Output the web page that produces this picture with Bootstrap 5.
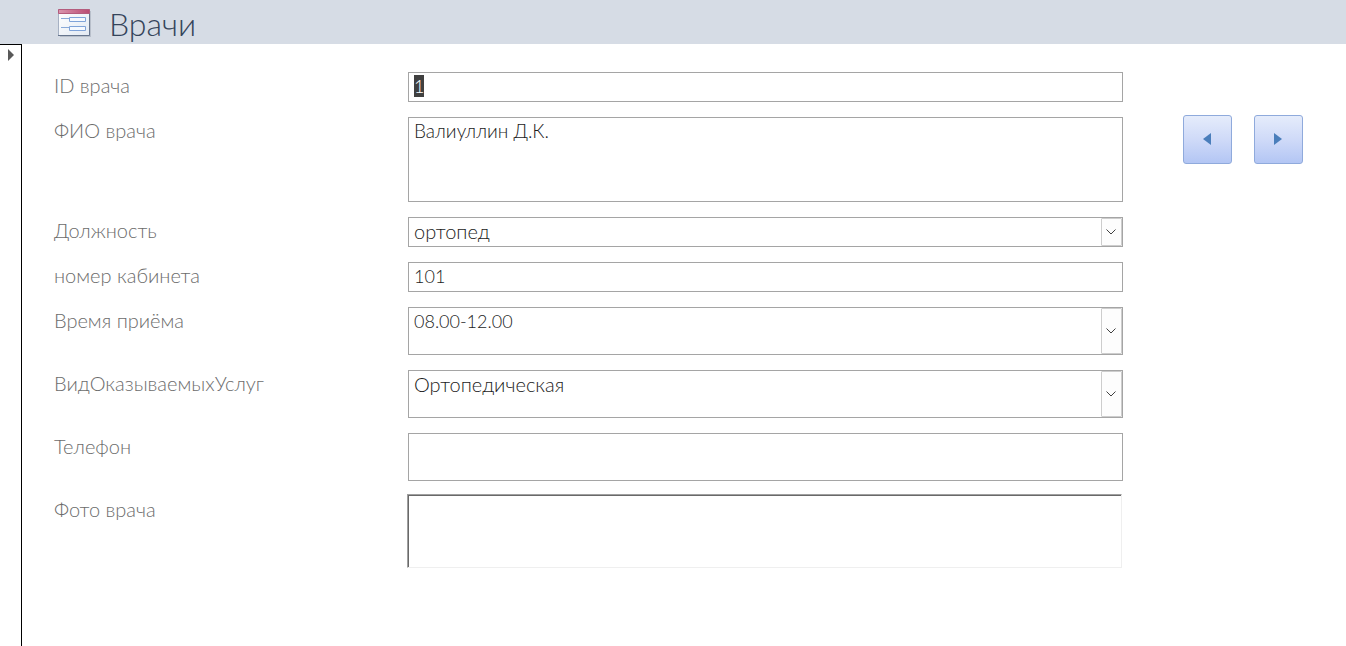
<!DOCTYPE html>
<html lang="ru">
<head>
<meta charset="utf-8">
<meta name="viewport" content="width=device-width, initial-scale=1">
<title>Врачи</title>
<link href="https://cdn.jsdelivr.net/npm/bootstrap@5.3.0/dist/css/bootstrap.min.css" rel="stylesheet">
<style>
body { font-family: "Century Gothic", Lato, "Open Sans", sans-serif; font-size: 20px; font-weight: 300; line-height: 26px; color: #1c1c1c; background: #fff; }
.form-header { background: #d6dce5; height: 44px; padding-left: 57px; gap: 18px; }
.form-header h1 { font-size: 32px; line-height: 40px; font-weight: 300; color: #34445a; padding-top: 4px; }
.record-selector { width: 22px; border-top: 1px solid #000; border-right: 1px solid #000; padding: 4px 0 0 8px; line-height: 0; }
.record-body { padding: 28px 43px 28px 32px; gap: 60px; }
.fields { display: grid; grid-template-columns: 354px minmax(0, 1fr); row-gap: 15px; }
.fields label { color: #6c6c6c; }
.fields .form-control, .fields .form-select { border: 1px solid #a5a5a5; border-radius: 0; padding: 0 5px 2px; font-size: 20px; font-weight: 300; line-height: 26px; color: #1c1c1c; background: #fff; box-shadow: none; resize: none; min-height: 0; height: 30px; display: block; }
.fields .form-control.memo { height: 85px; font-size: 19px; }
.fields .figures { font-size: 18px; }
.fields .tall { height: 48px; }
.fields select.tall { padding-bottom: 20px; }
.fields ::selection { background: #404040; color: #fff; }
.drop-arrow { top: 1px; right: 1px; bottom: 1px; width: 21px; border: 1px solid #cdcdcd; border-radius: 1px; background: #fdfdfd; pointer-events: none; }
.photo { height: 74px; margin: -2px 1px 0 -1px; border: 1px solid #efefef; border-top-color: #a0a0a0; border-left-color: #a0a0a0; box-shadow: inset 1px 1px #696969; }
.record-nav { gap: 22px; padding-top: 43px; }
.record-nav .btn { width: 49px; height: 49px; padding: 0; border: 1px solid #8faadc; border-radius: 3px; background: linear-gradient(#e5ecfb, #cfdaf8 50%, #b3c6f4); }
</style>
</head>
<body class="d-flex flex-column min-vh-100">
<header class="form-header d-flex align-items-center">
  <svg width="34" height="30" viewBox="0 0 34 30" aria-hidden="true">
    <defs><linearGradient id="pink" x2="1"><stop stop-color="#d995ad"/><stop offset="1" stop-color="#b94a72"/></linearGradient>
    <linearGradient id="paper" x2="1" y2="1"><stop stop-color="#fff"/><stop offset="1" stop-color="#e2e9f3"/></linearGradient></defs>
    <path d="M3 4h31v26H3z" fill="#8b94a3" opacity=".4"/>
    <path d="M1.500 2.500h31v26h-31z" fill="url(#paper)" stroke="#a6b1c3"/>
    <path d="M1 28.500h31.500V6" fill="none" stroke="#66758e"/>
    <path d="M1.500 2.500h31v4h-31z" fill="url(#pink)" stroke="#b45c7d"/>
    <path d="M4 11.500h8M4 20.500h8" stroke="#89a9d8"/>
    <path d="M12.500 10.500h16v4h-16zM12.500 19.500h16v4h-16z" fill="#f5f9ff" stroke="#7fa3d9"/>
  </svg>
  <h1 class="m-0">Врачи</h1>
</header>
<main class="d-flex flex-grow-1">
  <div class="record-selector flex-shrink-0"><svg width="6" height="12" aria-hidden="true"><path d="M0 0l6 6-6 6z" fill="#595959"/></svg></div>
  <form class="record-body d-flex flex-grow-1 align-items-start">
    <div class="fields flex-grow-1">
      <label for="doc-id">ID врача</label>
      <input class="form-control figures" id="doc-id" value="1">
      <label for="doc-name">ФИО врача</label>
      <textarea class="form-control memo" id="doc-name">Валиуллин Д.К.</textarea>
      <label for="doc-post">Должность</label>
      <div class="position-relative">
        <select class="form-select" id="doc-post"><option>ортопед</option></select>
        <span class="drop-arrow position-absolute d-flex align-items-center justify-content-center"><svg width="11" height="6"><path d="M.5.5L5 5 9.500.5" fill="none" stroke="#404040"/></svg></span>
      </div>
      <label for="doc-room">номер кабинета</label>
      <input class="form-control figures" id="doc-room" value="101">
      <label for="doc-time">Время приёма</label>
      <div class="position-relative">
        <select class="form-select tall figures" id="doc-time"><option>08.00-12.00</option></select>
        <span class="drop-arrow position-absolute d-flex align-items-center justify-content-center"><svg width="11" height="6"><path d="M.5.5L5 5 9.500.5" fill="none" stroke="#404040"/></svg></span>
      </div>
      <label for="doc-service">ВидОказываемыхУслуг</label>
      <div class="position-relative">
        <select class="form-select tall" id="doc-service"><option>Ортопедическая</option></select>
        <span class="drop-arrow position-absolute d-flex align-items-center justify-content-center"><svg width="11" height="6"><path d="M.5.5L5 5 9.500.5" fill="none" stroke="#404040"/></svg></span>
      </div>
      <label for="doc-phone">Телефон</label>
      <textarea class="form-control tall" id="doc-phone"></textarea>
      <label for="doc-photo">Фото врача</label>
      <output class="photo d-block" id="doc-photo"></output>
    </div>
    <div class="record-nav d-flex flex-shrink-0">
      <button type="button" class="btn d-flex align-items-center justify-content-center" aria-label="Предыдущая запись"><svg width="9" height="13"><path d="M8 0v12L0 6z" fill="#4a7ebb"/></svg></button>
      <button type="button" class="btn d-flex align-items-center justify-content-center" aria-label="Следующая запись"><svg width="9" height="13"><path d="M0 0l8 6-8 6z" fill="#4a7ebb"/></svg></button>
    </div>
  </form>
</main>
<script src="https://cdn.jsdelivr.net/npm/bootstrap@5.3.0/dist/js/bootstrap.bundle.min.js"></script>
<script>document.getElementById('doc-id').select();</script>
</body>
</html>
